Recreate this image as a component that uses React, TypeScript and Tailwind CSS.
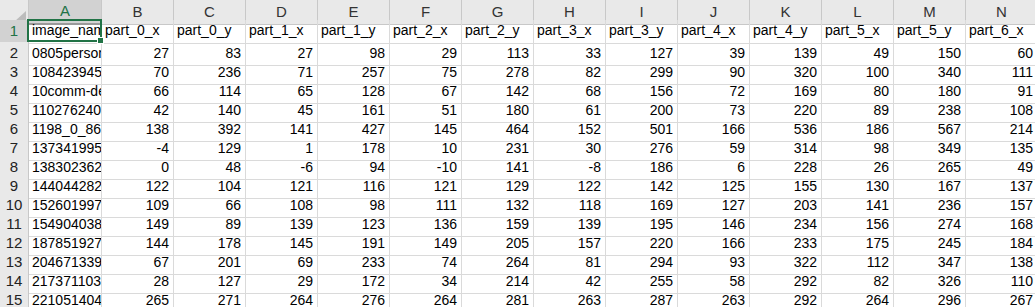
import React from "react";

const cols = ["A", "B", "C", "D", "E", "F", "G", "H", "I", "J", "K", "L", "M", "N"];

const header = [
  "image_name",
  "part_0_x",
  "part_0_y",
  "part_1_x",
  "part_1_y",
  "part_2_x",
  "part_2_y",
  "part_3_x",
  "part_3_y",
  "part_4_x",
  "part_4_y",
  "part_5_x",
  "part_5_y",
  "part_6_x",
];

const rows: [string, number[]][] = [
  ["0805person1.jpg", [27, 83, 27, 98, 29, 113, 33, 127, 39, 139, 49, 150, 60]],
  ["1084239450_e76e00b7e7.jpg", [70, 236, 71, 257, 75, 278, 82, 299, 90, 320, 100, 340, 111]],
  ["10comm-decarlo.jpg", [66, 114, 65, 128, 67, 142, 68, 156, 72, 169, 80, 180, 91]],
  ["1102762400_c4d3f6bd70.jpg", [42, 140, 45, 161, 51, 180, 61, 200, 73, 220, 89, 238, 108]],
  ["1198_0_861.jpg", [138, 392, 141, 427, 145, 464, 152, 501, 166, 536, 186, 567, 214]],
  ["1373419950_9f0c4b8d12.jpg", [-4, 129, 1, 178, 10, 231, 30, 276, 59, 314, 98, 349, 135]],
  ["1383023626_8a49e4879a.jpg", [0, 48, -6, 94, -10, 141, -8, 186, 6, 228, 26, 265, 49]],
  ["1440442823_b9c6ab7d6a.jpg", [122, 104, 121, 116, 121, 129, 122, 142, 125, 155, 130, 167, 137]],
  ["1526019976_7a0d0d9d2d.jpg", [109, 66, 108, 98, 111, 132, 118, 169, 127, 203, 141, 236, 157]],
  ["1549040388_b99e9fa295.jpg", [149, 89, 139, 123, 136, 159, 139, 195, 146, 234, 156, 274, 168]],
  ["1878519279_f905d4f34e.jpg", [144, 178, 145, 191, 149, 205, 157, 220, 166, 233, 175, 245, 184]],
  ["2046713398_91aaa6fe1c.jpg", [67, 201, 69, 233, 74, 264, 81, 294, 93, 322, 112, 347, 138]],
  ["2173711035_dbd53b4f9f.jpg", [28, 127, 29, 172, 34, 214, 42, 255, 58, 292, 82, 326, 110]],
  ["2210514040_6b03ff2629.jpg", [265, 271, 264, 276, 264, 281, 263, 287, 263, 292, 264, 296, 267]],
];

const grid = "grid grid-cols-[29px_73px_repeat(13,72px)]";

function RowHead({ n, active }: { n: number; active?: boolean }) {
  return (
    <div
      className={`flex items-center justify-center border-b border-r border-[#c8c8c8] text-[15px] ${
        active ? "bg-[#d2d2d2] text-[#217346]" : "bg-[#e9e9e9] text-[#222]"
      }`}
    >
      {n}
    </div>
  );
}

export default function App() {
  return (
    <div className="relative h-[307px] w-[1035px] overflow-hidden bg-white font-['Liberation_Sans',Arial,sans-serif] text-[14px] text-black">
      {/* column letters */}
      <div className={`${grid} h-[20px]`}>
        <div className="flex items-end justify-end border-b border-r border-[#c8c8c8] bg-[#e9e9e9] pb-[2px] pr-[2px]">
          <svg width="12" height="11" viewBox="0 0 12 11">
            <polygon points="12,0 12,11 0,11" fill="#bcbcbc" />
          </svg>
        </div>
        {cols.map((c, i) => (
          <div
            key={c}
            className={`flex items-center justify-center border-r border-[#c8c8c8] text-[15px] ${
              i === 0
                ? "border-b-2 border-b-[#9a9a9a] bg-[#d2d2d2] text-[#217346]"
                : "border-b bg-[#e9e9e9] text-[#333]"
            }`}
          >
            {c}
          </div>
        ))}
      </div>

      {/* header row */}
      <div className={`${grid} h-[22px]`}>
        <RowHead n={1} active />
        {header.map((h) => (
          <div
            key={h}
            className="flex items-end overflow-hidden whitespace-nowrap border-b border-r border-[#dadada] pb-[2px] pl-[3px]"
          >
            {h}
          </div>
        ))}
      </div>

      {/* data rows */}
      {rows.map(([name, vals], r) => (
        <div key={name} className={`${grid} h-[19px]`}>
          <RowHead n={r + 2} />
          <div className="flex items-end overflow-hidden whitespace-nowrap border-b border-r border-[#dadada] pb-[1px] pl-[3px]">
            {name}
          </div>
          {vals.map((v, j) => (
            <div
              key={j}
              className="flex items-end justify-end border-b border-r border-[#dadada] pb-[1px] pr-[4px]"
            >
              {v}
            </div>
          ))}
        </div>
      ))}

      {/* active cell A1 */}
      <div className="absolute left-[27px] top-[19px] h-[23px] w-[75px] border-2 border-[#217346]" />
      <div className="absolute left-[97px] top-[37px] h-[7px] w-[7px] border border-white bg-[#217346]" />
    </div>
  );
}
